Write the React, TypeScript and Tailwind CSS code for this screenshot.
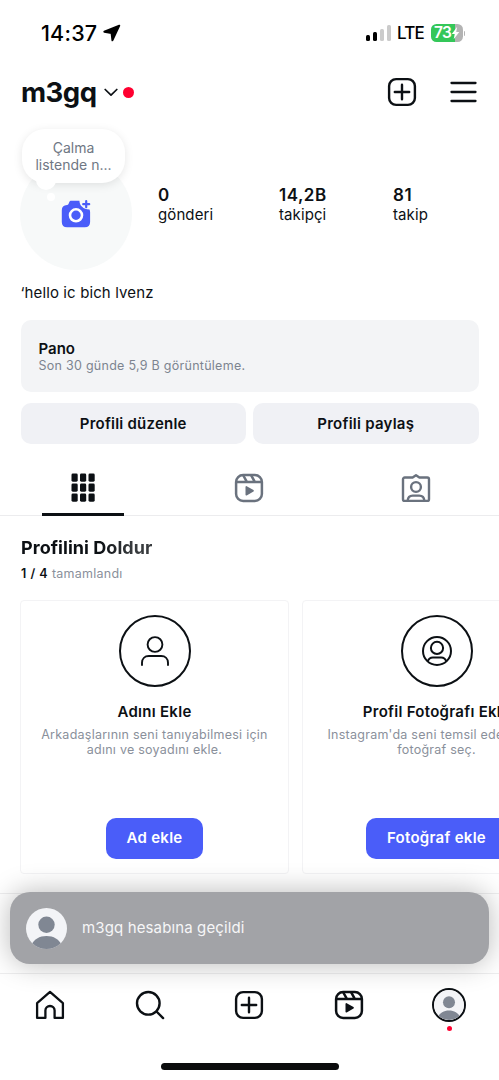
import { ReactNode } from "react";

interface IStat {
  value: string;
  label: string;
  className: string;
}

interface ITask {
  title: string;
  lines: string[];
  action: string;
  buttonClass: string;
  icon: ReactNode;
}

const stats: IStat[] = [
  { value: "0", label: "gönderi", className: "w-[121px]" },
  { value: "14,2B", label: "takipçi", className: "w-[114px]" },
  { value: "81", label: "takip", className: "" },
];

const PlusSquareIcon = ({ className }: { className?: string }) => (
  <svg
    width="30"
    height="30"
    viewBox="0 0 30 30"
    fill="none"
    stroke="currentColor"
    strokeWidth="2.4"
    strokeLinecap="round"
    className={className}
  >
    <rect x="2.1" y="2.1" width="25.8" height="25.8" rx="7" />
    <path d="M15 7.8v14.4M7.8 15h14.4" />
  </svg>
);

const GridIcon = () => (
  <svg width="24" height="29" viewBox="0 0 24 29" fill="currentColor" className="mt-[13px]">
    {[0.5, 10.5, 20.5].map((y) =>
      [0.5, 9, 17.5].map((x) => <rect key={`${x}-${y}`} x={x} y={y} width="6.2" height="8.2" rx="1.4" />)
    )}
  </svg>
);

const ReelsIcon = () => (
  <svg
    width="30"
    height="30"
    viewBox="0 0 30 30"
    fill="none"
    stroke="currentColor"
    strokeWidth="2.5"
    strokeLinejoin="round"
  >
    <rect x="2.1" y="2.1" width="25.8" height="25.8" rx="7" />
    <path d="M2.4 9h25.2M9.3 2.5l3.6 6.3M17.2 2.3l3.6 6.5" />
    <path d="M12.3 13.9v7.8l6.8-3.9z" fill="currentColor" strokeWidth="1.6" />
  </svg>
);

const TaggedIcon = () => (
  <svg
    width="30"
    height="30"
    viewBox="0 0 30 30"
    fill="none"
    stroke="currentColor"
    strokeWidth="2.4"
    strokeLinejoin="round"
    strokeLinecap="round"
  >
    <path d="M3.7 4.5h7.9L15 2.2l3.4 2.3h7.9A1.7 1.7 0 0 1 28 6.2v20a1.7 1.7 0 0 1-1.7 1.7H3.7A1.7 1.7 0 0 1 2 26.2v-20a1.7 1.7 0 0 1 1.7-1.7z" />
    <circle cx="15" cy="14" r="4.9" />
    <path d="M6.7 27.6c.2-3.3 2.2-5 5-5h6.600c2.800 0 4.800 1.700 5 5" />
  </svg>
);

const CameraIcon = () => (
  <svg width="30" height="30" viewBox="0 0 30 30" fill="none">
    <path
      d="M10 1.700h8.400c.3 5 3.600 8.400 10.100 8.800.4.700.6 1.500.6 2.500v9.900c0 3.400-1.900 5.300-5.300 5.300H6.100c-3.400 0-5.300-1.900-5.300-5.300V11.200c0-3.400 1.700-5.200 5.200-5.300.7 0 1.200-.3 1.500-.9l.7-1.800c.4-1 .9-1.500 1.800-1.500z"
      fill="#4a5df9"
    />
    <circle cx="15" cy="16.300" r="6" stroke="#fff" strokeWidth="2.600" />
    <path d="M25.200 2.200v6M22.200 5.200h6" stroke="#4a5df9" strokeWidth="2.200" strokeLinecap="round" />
  </svg>
);

const Avatar = ({ className }: { className?: string }) => (
  <svg viewBox="0 0 40 40" className={className}>
    <defs>
      <clipPath id="avatar-clip">
        <circle cx="20" cy="20" r="20" />
      </clipPath>
    </defs>
    <g clipPath="url(#avatar-clip)">
      <rect width="40" height="40" fill="#f3f4f7" />
      <circle cx="20" cy="16.4" r="8" fill="#808793" />
      <path d="M4 37.5C8 30 13 27.2 20 27.2s12 2.800 16 10.300V41H4z" fill="#808793" />
    </g>
  </svg>
);

const tasks: ITask[] = [
  {
    title: "Adını Ekle",
    lines: ["Arkadaşlarının seni tanıyabilmesi için", "adını ve soyadını ekle."],
    action: "Ad ekle",
    buttonClass: "w-[97px]",
    icon: (
      <svg width="30" height="32" viewBox="0 0 30 32" fill="none" stroke="currentColor" strokeWidth="1.9" strokeLinecap="round">
        <circle cx="15" cy="9.5" r="7.4" />
        <path d="M2 30v-2.200c0-4.200 2.800-6.800 6.800-6.800h12.400c4 0 6.800 2.600 6.800 6.800V30" />
      </svg>
    ),
  },
  {
    title: "Profil Fotoğrafı Ekle",
    lines: ["Instagram'da seni temsil edecek bir", "fotoğraf seç."],
    action: "Fotoğraf ekle",
    buttonClass: "w-[142px]",
    icon: (
      <svg width="32" height="32" viewBox="0 0 32 32" fill="none" stroke="currentColor" strokeWidth="2">
        <circle cx="16" cy="16" r="14" />
        <circle cx="16" cy="12.9" r="6.1" />
        <path d="M6.800 26.300c.9-2.800 2.600-3.900 5-3.900h8.400c2.400 0 4.100 1.100 5 3.900" />
      </svg>
    ),
  },
];

const StatusBar = () => (
  <div className="flex h-[66px] items-center pl-[41px] pr-[34px] text-black">
    <span className="w-[56px] whitespace-nowrap pt-px text-[21.5px] font-medium leading-none tracking-[0.2px]">
      14:37
    </span>
    <svg width="18" height="18" viewBox="0 0 18 18" className="ml-[6px]">
      <path
        d="M16.3 1.7 1.3 7.7l7.2 1.3.9 7.3z"
        fill="currentColor"
        stroke="currentColor"
        strokeWidth="1.9"
        strokeLinejoin="round"
      />
    </svg>
    <div className="ml-auto flex items-center">
      <div className="flex h-4 items-end gap-[3px]">
        <span className="h-[6px] w-1 rounded-[1.5px] bg-black" />
        <span className="h-[9px] w-1 rounded-[1.5px] bg-black" />
        <span className="h-[12px] w-1 rounded-[1.5px] bg-[#cbcbcb]" />
        <span className="h-4 w-1 rounded-[1.5px] bg-[#cbcbcb]" />
      </div>
      <span className="ml-[6.5px] w-[27px] whitespace-nowrap pt-px text-[17px] font-medium leading-none tracking-[-0.8px]">
        LTE
      </span>
      <div className="ml-[6.5px] flex h-[18px] w-[32px] items-center overflow-hidden rounded-[5.5px] bg-[linear-gradient(90deg,#34c759_74%,#b3b3b3_74%)] pl-[3.5px]">
        <span className="text-[15.5px] font-semibold leading-none tracking-[-0.7px] text-white">73</span>
        <svg width="9" height="14" viewBox="0 0 9 14">
          <path d="M6.2.8.8 7.9h2.9l-1 5.3 5.6-7.300H5.200z" fill="#fff" />
        </svg>
      </div>
      <span className="ml-px h-[5px] w-[1.5px] rounded-r-full bg-[#b3b3b3]" />
    </div>
  </div>
);

const Header = () => (
  <div className="flex h-[52px] items-center pl-[21px] pr-[22px]">
    <h1 className="w-[77px] whitespace-nowrap pt-[2px] text-[27.5px] font-bold leading-none tracking-[-0.5px]">m3gq</h1>
    <svg
      width="14"
      height="9"
      viewBox="0 0 14 9"
      fill="none"
      stroke="currentColor"
      strokeWidth="1.7"
      strokeLinecap="round"
      strokeLinejoin="round"
      className="ml-[6px]"
    >
      <path d="M1.2 1.5 7 7.2l5.8-5.7" />
    </svg>
    <span className="ml-[5px] h-[11px] w-[11px] rounded-full bg-[#ff0030]" />
    <PlusSquareIcon className="ml-auto" />
    <svg
      width="27"
      height="22"
      viewBox="0 0 27 22"
      stroke="currentColor"
      strokeWidth="2.3"
      strokeLinecap="round"
      className="ml-[33px]"
    >
      <path d="M1.5 2h24M1.5 11h24M1.5 20h24" />
    </svg>
  </div>
);

const Profile = () => (
  <div className="flex h-[152px] items-end pl-5">
    <div className="relative flex h-[112px] w-[112px] items-center justify-center rounded-full bg-[#f7f9f9]">
      <CameraIcon />
      <div className="absolute -top-[29px] left-[2px] h-[54px] w-[103px] rounded-[23px] bg-white shadow-[0_2px_10px_rgba(0,0,0,0.1)]" />
      <span className="absolute left-[16px] top-[12px] h-5 w-5 rounded-full bg-white" />
      <span className="absolute left-[27px] top-[35px] h-2 w-2 rounded-full bg-white" />
      <div className="absolute -top-[19px] left-[2px] w-[103px] text-center text-[14px] leading-[17px] text-[#6f7784]">
        <p>Çalma</p>
        <p className="whitespace-nowrap">listende n...</p>
      </div>
    </div>
    <div className="ml-[26px] flex h-[88px]">
      {stats.map((stat) => (
        <div key={stat.label} className={stat.className}>
          <p className="text-[17px] font-semibold leading-[26px] tracking-[0.5px]">{stat.value}</p>
          <p className="text-[15px] leading-[14px] tracking-[0.1px]">{stat.label}</p>
        </div>
      ))}
    </div>
  </div>
);

const Tabs = () => (
  <div className="grid h-[72px] grid-cols-3 border-b border-[#ececee] pt-[16px] text-[#6a727e]">
    <div className="flex flex-col items-center justify-between text-[#0c1014]">
      <GridIcon />
      <span className="-mb-px h-[3px] w-[82px] bg-current" />
    </div>
    <div className="flex justify-center pt-[13px]">
      <ReelsIcon />
    </div>
    <div className="flex justify-center pt-[13px]">
      <TaggedIcon />
    </div>
  </div>
);

const TaskCard = ({ task }: { task: ITask }) => (
  <div className="flex h-[274px] w-[269px] shrink-0 flex-col items-center rounded-[4px] border border-[#f3f3f5] pt-[14px]">
    <div className="flex h-[72px] w-[72px] items-center justify-center rounded-full border-2 border-[#0c1014]">
      {task.icon}
    </div>
    <h3 className="mt-[14px] whitespace-nowrap text-[15px] font-semibold leading-[22px] tracking-[0.28px]">
      {task.title}
    </h3>
    <div className="mt-[4px] text-center text-[12.5px] leading-[15px] tracking-[0.25px] text-[#8a909b]">
      {task.lines.map((line) => (
        <p key={line} className="whitespace-nowrap">
          {line}
        </p>
      ))}
    </div>
    <button
      className={`mb-[14px] mt-auto h-[41px] rounded-[10px] bg-[#4a5df9] text-[15px] font-semibold tracking-[0.28px] text-white ${task.buttonClass}`}
    >
      {task.action}
    </button>
  </div>
);

const Toast = () => (
  <div className="absolute left-[10px] top-[892px] flex h-[72px] w-[479px] items-center rounded-[20px] bg-[#a2a3a7] pl-[16px] shadow-[0_0_28px_rgba(0,0,0,0.28)]">
    <Avatar className="h-[41px] w-[41px]" />
    <span className="ml-[15px] text-[15px] tracking-[0.13px] text-[#f6f6f7]">m3gq hesabına geçildi</span>
  </div>
);

const BottomNav = () => (
  <nav className="grid h-[63px] grid-cols-5 border-t border-[#eeeeef]">
    <div className="flex items-center justify-center">
      <svg width="30" height="30" viewBox="0 0 30 30" fill="none" stroke="currentColor" strokeWidth="2.3" strokeLinejoin="round">
        <path d="M2.1 13.1 15 1.9l12.9 11.2v14.800h-8.300v-7.300a4.600 4.600 0 0 0-9.200 0v7.300H2.100z" />
      </svg>
    </div>
    <div className="flex items-center justify-center">
      <svg width="30" height="30" viewBox="0 0 30 30" fill="none" stroke="currentColor" strokeWidth="2.4" strokeLinecap="round">
        <circle cx="13.3" cy="13.3" r="11.3" />
        <path d="m21.5 21.5 6.6 6.6" />
      </svg>
    </div>
    <div className="flex items-center justify-center">
      <PlusSquareIcon />
    </div>
    <div className="flex items-center justify-center">
      <ReelsIcon />
    </div>
    <div className="relative flex items-center justify-center">
      <Avatar className="h-[34px] w-[34px] rounded-full border-2 border-[#0c1014]" />
      <span className="absolute bottom-[5px] h-[5px] w-[5px] rounded-full bg-[#ff0030]" />
    </div>
  </nav>
);

const App = () => {
  return (
    <div className="relative flex h-[1080px] w-[499px] flex-col overflow-hidden bg-white font-['Inter',sans-serif] text-[#0c1014]">
      <StatusBar />
      <Header />
      <Profile />
      <p className="ml-[20.5px] mt-[13px] text-[15px] leading-5 tracking-[0.12px]">‘hello ic bich lvenz</p>

      <section className="mx-[20.5px] mt-[17px] h-[72px] rounded-[10px] bg-[#f3f4f6] pl-[18px] pt-[19px]">
        <h2 className="text-[15px] font-semibold leading-5">Pano</h2>
        <p className="text-[12.5px] leading-[13px] tracking-[0.27px] text-[#7d8490]">Son 30 günde 5,9 B görüntüleme.</p>
      </section>
      <div className="mx-[20.5px] mt-[11px] flex gap-[7px]">
        <button className="h-[41px] flex-1 rounded-[10px] bg-[#f0f1f5] pt-px text-[15px] font-semibold tracking-[0.22px]">
          Profili düzenle
        </button>
        <button className="h-[41px] flex-1 rounded-[10px] bg-[#f0f1f5] pt-px text-[15px] font-semibold tracking-[0.25px]">
          Profili paylaş
        </button>
      </div>
      <Tabs />

      <section className="h-[378px] overflow-hidden border-b border-[#eeeeef] pl-5">
        <h2 className="ml-px mt-[20px] w-fit bg-[linear-gradient(90deg,#0c1014_60%,#383b3e_85%)] bg-clip-text text-[18px] font-bold leading-6 tracking-[0.04px] text-transparent">
          Profilini Doldur
        </h2>
        <p className="ml-px mt-[5px] text-[12.5px] leading-[18px] tracking-[0.25px] text-[#8a909b]">
          <b className="font-semibold tracking-[0.5px] text-[#0c1014]">1 / 4</b> tamamlandı
        </p>
        <div className="mt-[17px] flex gap-[13px]">
          {tasks.map((task) => (
            <TaskCard key={task.title} task={task} />
          ))}
        </div>
      </section>

      <div className="mt-auto">
        <BottomNav />
        <div className="flex h-[44px] justify-center pt-[27px]">
          <span className="h-[7px] w-[178px] rounded-full bg-[#0b0c0d]" />
        </div>
      </div>
      <Toast />
    </div>
  );
};

export default App;
